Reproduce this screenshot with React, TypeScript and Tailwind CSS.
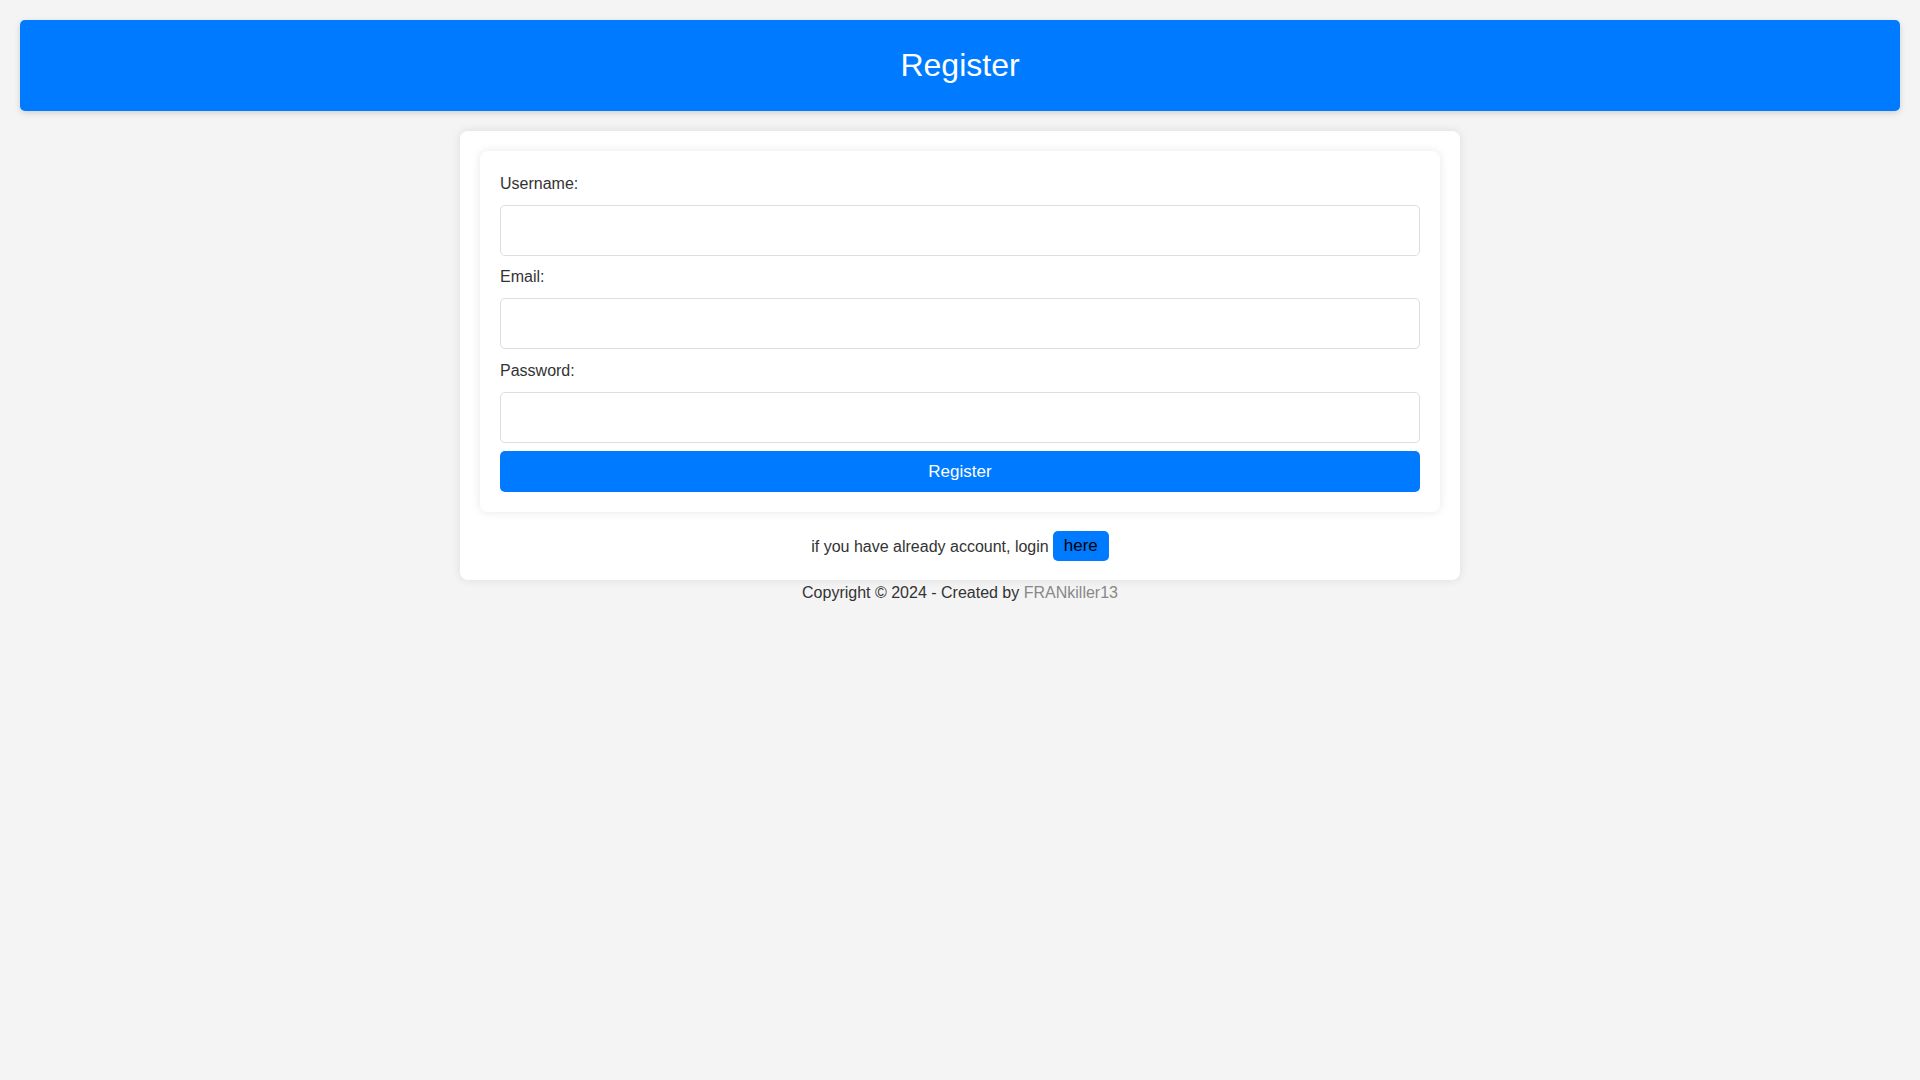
import React from "react";

export default function App() {
  const font = { fontFamily: '"Liberation Sans", Arial, sans-serif' };
  return (
    <div className="min-h-screen w-full bg-[#f4f4f4] text-[#333] pt-5" style={font}>
      <header className="mx-5 h-[91px] rounded-[5px] bg-[#007bff] shadow-[0_2px_6px_rgba(0,0,0,0.15)] flex items-center justify-center">
        <h1 className="text-[32px] leading-[37px] text-white font-normal">Register</h1>
      </header>

      <main className="mx-auto mt-[20px] w-[1000px] rounded-[8px] bg-white px-5 pt-5 pb-[19px] shadow-[0_0_10px_rgba(0,0,0,0.1)]">
        <form
          className="flex flex-col rounded-[8px] bg-white p-5 shadow-[0_0_10px_rgba(0,0,0,0.1)]"
          onSubmit={(e) => e.preventDefault()}
        >
          <label className="block mt-1 mb-3 text-base leading-[18px]">Username:</label>
          <input type="text" className="block h-[51px] w-full rounded-[5px] border border-[#dddddd] bg-white px-[10px] outline-none" />
          <label className="block mt-3 mb-3 text-base leading-[18px]">Email:</label>
          <input type="email" className="block h-[51px] w-full rounded-[5px] border border-[#dddddd] bg-white px-[10px] outline-none" />
          <label className="block mt-[13px] mb-3 text-base leading-[18px]">Password:</label>
          <input type="password" className="block h-[51px] w-full rounded-[5px] border border-[#dddddd] bg-white px-[10px] outline-none" />
          <button
            type="submit"
            className="mt-[8px] h-[41px] w-full rounded-[5px] bg-[#007bff] text-[17px] leading-[20px] text-white"
          >
            Register
          </button>
        </form>

        <p className="mt-[19px] flex h-[30px] items-center justify-center text-base leading-[18px]">
          <span className="mt-[2px]">if you have already account, login</span>
          <a
            href="#"
            className="ml-[4px] flex h-[30px] items-center rounded-[5px] bg-[#007bff] px-[11px] text-[17px] leading-[20px] text-black"
          >
            here
          </a>
        </p>
      </main>

      <footer className="mt-[4px] text-center text-base leading-[18px]">
        Copyright © 2024 - Created by <a href="#" className="text-[#888]">FRANkiller13</a>
      </footer>
    </div>
  );
}
